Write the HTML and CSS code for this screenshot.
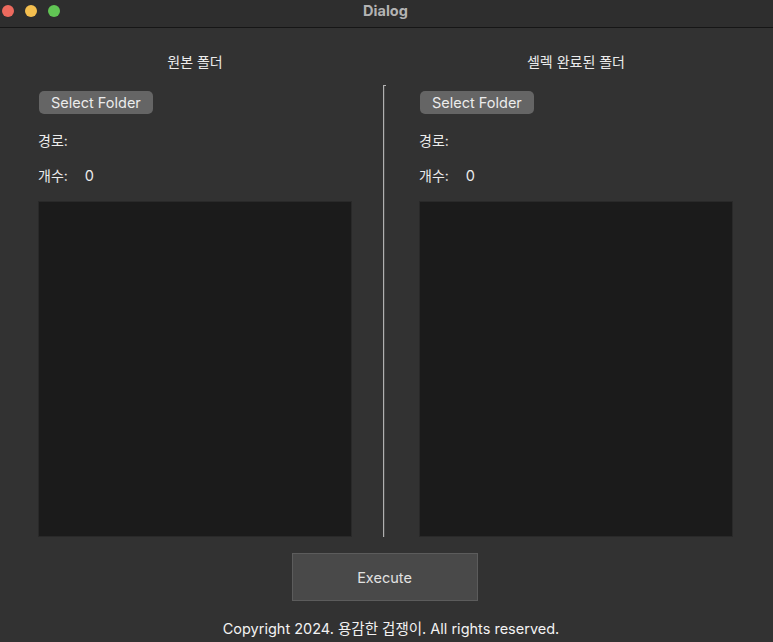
FILE: index.html
```html
<!DOCTYPE html>
<html lang="ko">
<head>
<meta charset="utf-8">
<title>Dialog</title>
<link rel="stylesheet" href="styles.css">
</head>
<body>
<div class="window">
  <div class="titlebar">
    <div class="lights">
      <span class="light red"></span>
      <span class="light yellow"></span>
      <span class="light green"></span>
    </div>
    <div class="title">Dialog</div>
  </div>
  <div class="content">
    <div class="headers">
      <div class="header">원본 폴더</div>
      <div class="header-gap"></div>
      <div class="header">셀렉 완료된 폴더</div>
    </div>
    <div class="panes">
      <div class="pane">
        <button class="select-btn">Select Folder</button>
        <div class="label">경로:</div>
        <div class="label">개수:<span class="count">0</span></div>
        <div class="list"></div>
      </div>
      <div class="divider"></div>
      <div class="pane">
        <button class="select-btn">Select Folder</button>
        <div class="label">경로:</div>
        <div class="label">개수:<span class="count">0</span></div>
        <div class="list"></div>
      </div>
    </div>
    <div class="actions">
      <button class="execute-btn">Execute</button>
    </div>
    <div class="copyright">Copyright 2024. 용감한 겁쟁이. All rights reserved.</div>
  </div>
</div>
</body>
</html>
```
FILE: styles.css
```css
* { box-sizing: border-box; }
html, body {
  margin: 0;
  padding: 0;
  background: #323232;
}
body {
  width: 773px;
  height: 642px;
  overflow: hidden;
  font-family: Inter, "Noto Sans CJK KR", "Noto Sans", sans-serif;
  color: #e6e6e6;
}
.window {
  display: flex;
  flex-direction: column;
  height: 642px;
}
.titlebar {
  position: relative;
  height: 28px;
  background: #2e2e2e;
  border-bottom: 1px solid #161616;
  display: flex;
  align-items: center;
  justify-content: center;
}
.lights {
  position: absolute;
  left: 2px;
  top: 5px;
  display: flex;
  gap: 11px;
}
.light {
  width: 12px;
  height: 12px;
  border-radius: 50%;
  display: block;
}
.red { background: #ec6a5e; }
.yellow { background: #f4bf4f; }
.green { background: #61c554; }
.title {
  font-weight: 700;
  font-size: 14.5px;
  color: #b3b3b3;
  margin-top: -6px;
  margin-left: -2px;
}
.content {
  flex: 1;
  display: flex;
  flex-direction: column;
  padding: 0 40px 0 38px;
}
.headers {
  display: flex;
  margin-top: 24px;
  height: 20px;
  line-height: 20px;
}
.header {
  width: 314px;
  flex-shrink: 0;
  text-align: center;
  font-size: 14px;
  color: #ececec;
}
.header-gap { width: 67px; flex-shrink: 0; }
.panes {
  display: flex;
  margin-top: 13px;
  height: 452px;
}
.pane {
  width: 314px;
  flex-shrink: 0;
  display: flex;
  flex-direction: column;
  align-items: flex-start;
  padding-top: 6px;
}
.divider {
  flex-shrink: 0;
  width: 1px;
  margin: 0 35px 0 31px;
  background: #b0b0b0;
  box-shadow: 1px 0 0 #4a4a4a;
  position: relative;
}
.divider::before {
  content: "";
  position: absolute;
  left: 0;
  top: 0;
  width: 3px;
  height: 1px;
  background: #b0b0b0;
}
.select-btn {
  margin-left: 1px;
  height: 23px;
  padding: 0 12px;
  border: none;
  border-radius: 5px;
  background: #656565;
  color: #ececec;
  font-family: inherit;
  font-size: 14.5px;
  line-height: 23px;
}
.label {
  font-size: 14px;
  line-height: 18px;
  color: #ececec;
  margin-top: 17px;
}
.label:nth-of-type(1) { margin-top: 18px; }
.count {
  margin-left: 17px;
  font-size: 14.5px;
}
.list {
  margin-top: 16px;
  width: 314px;
  flex: 1;
  background: #1b1b1b;
  border: 1px solid #292929;
}
.actions {
  display: flex;
  justify-content: center;
  margin-top: 16px;
  padding-right: 2px;
}
.execute-btn {
  width: 186px;
  height: 48px;
  background: #494949;
  border: 1px solid #5c5c5c;
  color: #e2e2e2;
  font-family: inherit;
  font-size: 14.5px;
}
.copyright {
  margin-top: 19px;
  text-align: center;
  font-size: 14.5px;
  line-height: 18px;
  color: #f2f2f2;
  padding-left: 11px;
}
```
